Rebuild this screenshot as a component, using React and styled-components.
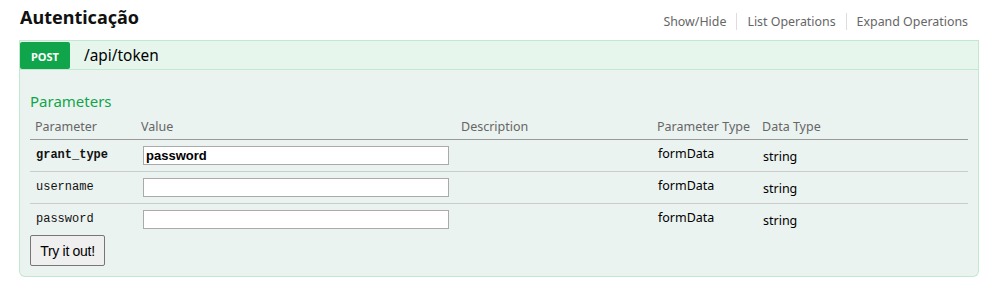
import React from 'react';
import styled, { createGlobalStyle } from 'styled-components';

const Global = createGlobalStyle`
  html, body { margin: 0; padding: 0; background: #fff; }
  body { font-family: "Noto Sans", "Open Sans", sans-serif; color: #000; }
`;

const Wrap = styled.div`
  width: 960px;
  margin-left: 19px;
`;

const TopBar = styled.div`
  display: flex;
  justify-content: space-between;
  align-items: flex-start;
  height: 40px;
`;

const Title = styled.h2`
  margin: 4px 0 0 1px;
  font-size: 18px;
  line-height: 26px;
  font-weight: 700;
  color: #111;
`;

const Links = styled.ul`
  display: flex;
  list-style: none;
  margin: 13px 11px 0 0;
  padding: 0;
`;

const LinkItem = styled.li`
  font-size: 12.4px;
  line-height: 17px;
  color: #666;
  padding: 0 10px;
  border-left: 1px solid #ddd;
  &:first-child { border-left: none; }
  &:last-child { padding-right: 0; }
`;

const Heading = styled.div`
  display: flex;
  align-items: center;
  height: 28px;
  background: #e7f6ec;
  border: 1px solid #c3e8d1;
`;

const Method = styled.span`
  display: flex;
  align-items: center;
  justify-content: center;
  width: 50px;
  height: 27px;
  margin-top: 1px;
  align-self: flex-start;
  background: #10a54a;
  color: #fff;
  border-radius: 2px;
  font-size: 11px;
  font-weight: 700;
  text-transform: uppercase;
  padding-top: 1px;
  box-sizing: border-box;
`;

const Path = styled.span`
  padding-left: 14px;
  font-size: 15.4px;
  color: #000;
`;

const Content = styled.div`
  background: #ebf3f0;
  border: 1px solid #c3e8d1;
  border-top: none;
  border-radius: 0 0 6px 6px;
  padding: 10px;
`;

const SectionTitle = styled.h4`
  margin: 0;
  padding: 11px 0 3px;
  font-size: 15px;
  line-height: 20px;
  font-weight: 400;
  color: #10a54a;
`;

const Table = styled.table`
  width: 938px;
  border-collapse: collapse;
  table-layout: fixed;
`;

const Th = styled.th`
  text-align: left;
  font-weight: 400;
  font-size: 12.5px;
  line-height: 16px;
  color: #666;
  padding: 5px 5px 4px;
  border-bottom: 1px solid #999;
`;

const Td = styled.td`
  padding: ${p => (p.$shift ? '9px 6px 3px' : '6px')};
  font-size: 12.5px;
  line-height: 16px;
  vertical-align: top;
  border-bottom: ${p => (p.$last ? 'none' : '1px solid #ccc')};
  color: #000;
`;

const Code = styled.code`
  font-family: "Liberation Mono", "DejaVu Sans Mono", monospace;
  font-size: 12px;
  font-weight: ${p => (p.$required ? 700 : 400)};
  color: #111;
`;

const Input = styled.input`
  display: block;
  box-sizing: border-box;
  width: 306px;
  height: 19px;
  margin: 0 0 0 1px;
  padding: 0 2px;
  border: 1px solid #aaa;
  background: #fff;
  font-family: "Liberation Sans", Arial, sans-serif;
  font-size: 13px;
  font-weight: ${p => (p.$required ? 700 : 400)};
  color: #000;
  outline: none;
`;

const Button = styled.button`
  display: block;
  width: 75px;
  height: 31px;
  padding: 0;
  background: #efefef;
  border: 1px solid #767676;
  border-radius: 2px;
  font-family: "Liberation Sans", Arial, sans-serif;
  font-size: 14px;
  letter-spacing: -0.3px;
  color: #000;
`;

const params = [
  { name: 'grant_type', value: 'password', required: true },
  { name: 'username', value: '' },
  { name: 'password', value: '' },
];

export default function App() {
  return (
    <>
      <Global />
      <Wrap>
        <TopBar>
          <Title>Autenticação</Title>
          <Links>
            <LinkItem>Show/Hide</LinkItem>
            <LinkItem>List Operations</LinkItem>
            <LinkItem>Expand Operations</LinkItem>
          </Links>
        </TopBar>
        <Heading>
          <Method>post</Method>
          <Path>/api/token</Path>
        </Heading>
        <Content>
          <SectionTitle>Parameters</SectionTitle>
          <Table>
            <colgroup>
              <col style={{ width: 106 }} />
              <col style={{ width: 320 }} />
              <col style={{ width: 196 }} />
              <col style={{ width: 105 }} />
              <col style={{ width: 211 }} />
            </colgroup>
            <thead>
              <tr>
                <Th>Parameter</Th>
                <Th>Value</Th>
                <Th>Description</Th>
                <Th>Parameter Type</Th>
                <Th>Data Type</Th>
              </tr>
            </thead>
            <tbody>
              {params.map((p, i) => {
                const last = i === params.length - 1;
                return (
                  <tr key={p.name}>
                    <Td $last={last}><Code $required={p.required}>{p.name}</Code></Td>
                    <Td $last={last}><Input $required={p.required} defaultValue={p.value} /></Td>
                    <Td $last={last}></Td>
                    <Td $last={last}>formData</Td>
                    <Td $last={last} $shift>string</Td>
                  </tr>
                );
              })}
            </tbody>
          </Table>
          <Button>Try it out!</Button>
        </Content>
      </Wrap>
    </>
  );
}
